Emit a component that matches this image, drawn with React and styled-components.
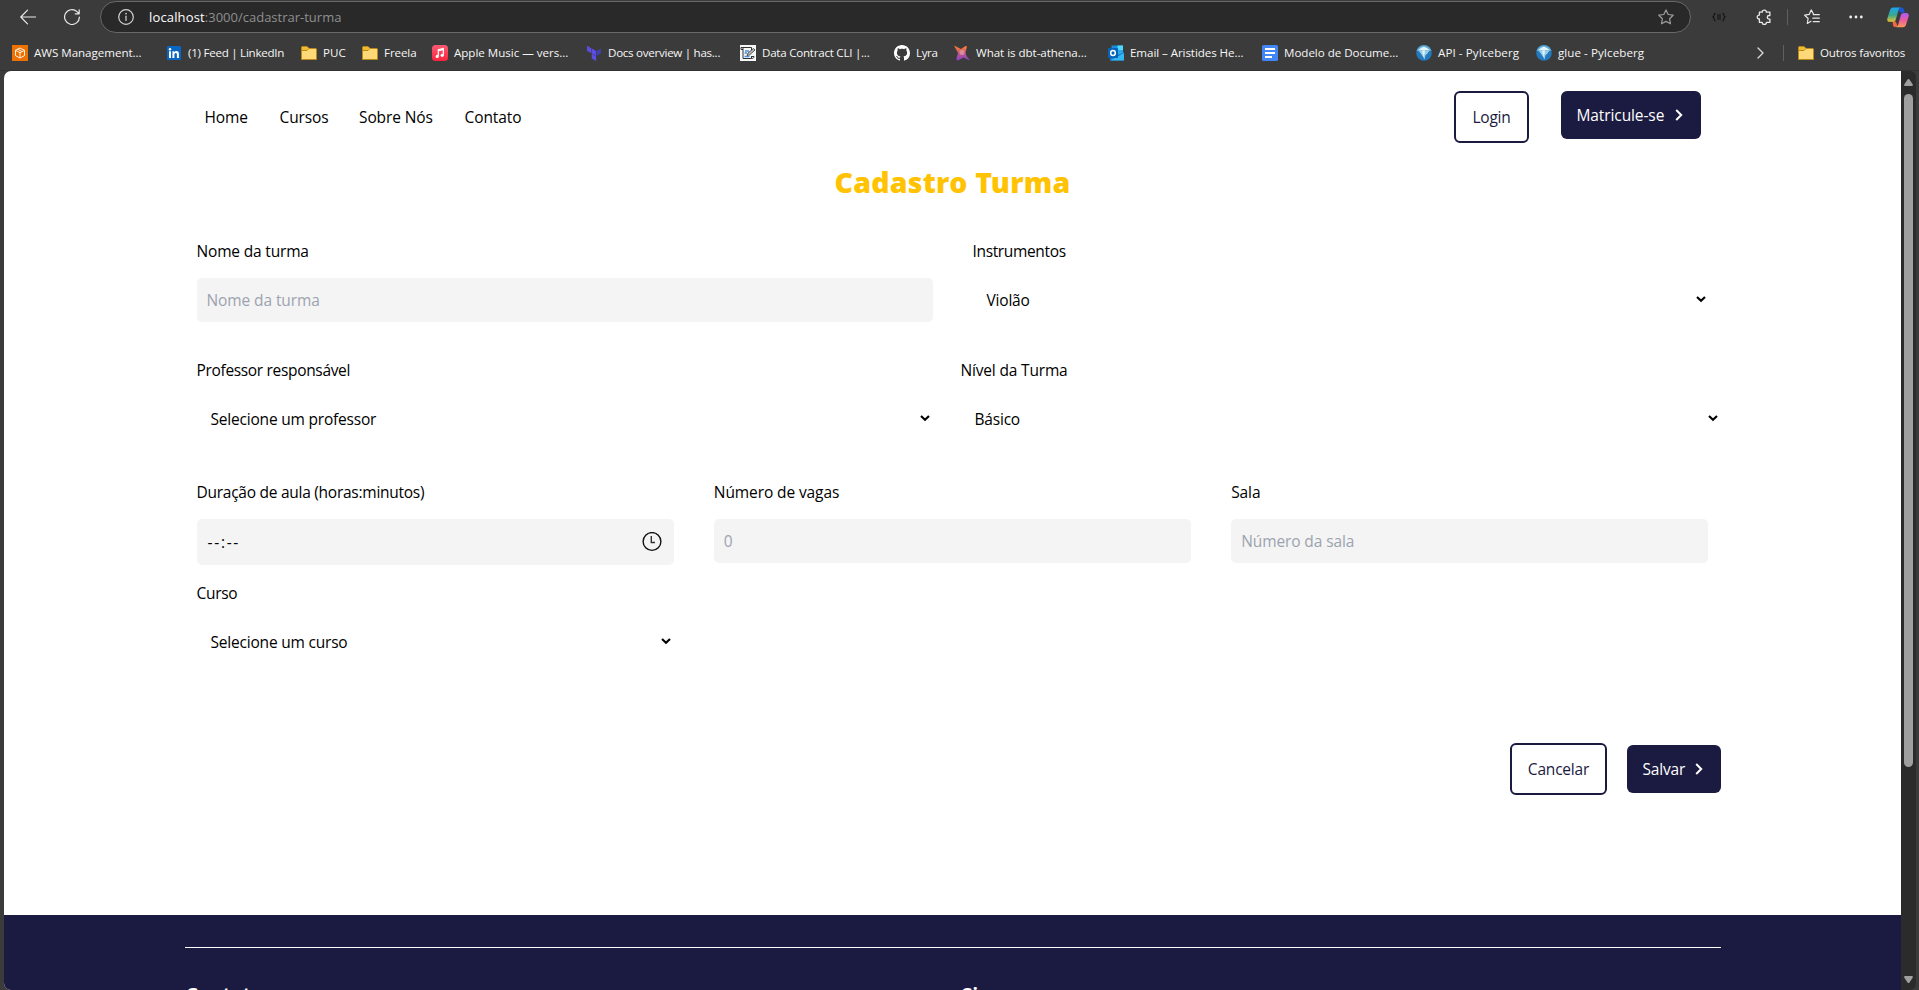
import React from "react";
import styled, { createGlobalStyle } from "styled-components";

const NAVY = "#1b1a40";

const GlobalStyle = createGlobalStyle`
  * { box-sizing: border-box; }
  body {
    margin: 0;
    background: #3b3b3b;
    font-family: "Open Sans", "Noto Sans", sans-serif;
    font-size: 15.5px;
    line-height: 24px;
    letter-spacing: -0.1px;
    color: #000;
  }
  svg { display: block; flex: none; }
`;

const Window = styled.div`
  display: flex;
  flex-direction: column;
  width: 1919px;
  height: 990px;
  overflow: hidden;
  background: #3b3b3b;
`;

/* ---------- browser chrome ---------- */

const Toolbar = styled.div`
  display: flex;
  align-items: center;
  height: 34px;
  padding: 0 10px 0 20px;
`;

const ToolIcon = styled.div`
  display: flex;
  margin-left: ${(p) => p.$gap || 0}px;
`;

const AddressBar = styled.div`
  display: flex;
  align-items: center;
  width: 1591px;
  height: 32px;
  margin: 1px 0 1px 20px;
  padding: 0 16px 0 17px;
  border: 1px solid #686868;
  border-radius: 16px;
  background: #292929;
`;

const Url = styled.div`
  flex: 1;
  margin-left: 15px;
  font-size: 13px;
  letter-spacing: 0;
  color: #8f8f8f;
`;

const Host = styled.span`
  color: #fff;
  letter-spacing: 0.15px;
`;

const Divider = styled.div`
  width: 1px;
  height: 16px;
  margin-left: ${(p) => p.$gap}px;
  background: #606060;
`;

const BookmarksBar = styled.div`
  display: flex;
  align-items: center;
  height: 37px;
  padding: 1px 0 0 12px;
  border-bottom: 1px solid #323232;
  color: #f6f6f6;
`;

const Bookmark = styled.div`
  display: flex;
  align-items: center;
  gap: 6px;
  flex: none;
  width: ${(p) => p.$width}px;
  font-size: 11.6px;
  line-height: 16px;
  letter-spacing: ${(p) => p.$track || 0}px;
  white-space: nowrap;
`;

const BookmarkEnd = styled.div`
  display: flex;
  align-items: center;
  margin-left: auto;
`;

/* ---------- viewport ---------- */

const Viewport = styled.div`
  display: flex;
  height: 919px;
  padding: 0 3px 0 4px;
`;

const Page = styled.div`
  display: flex;
  flex-direction: column;
  flex: 1;
  overflow: hidden;
  background: #fff;
  border-radius: 7px 0 0 7px;
`;

const Scrollbar = styled.div`
  display: flex;
  flex-direction: column;
  align-items: center;
  width: 15px;
  padding: 8px 0 7px;
  background: #2b2b2b;
  border-radius: 0 6px 6px 0;
`;

const Thumb = styled.div`
  width: 9px;
  height: 673px;
  margin: 8px 0 auto;
  border-radius: 5px;
  background: #9f9f9f;
`;

const Container = styled.div`
  width: 1536px;
  margin: 0 auto;
`;

const Header = styled.header`
  display: flex;
  align-items: center;
  height: 72px;
  padding: 20px 20px 0;
`;

const Nav = styled.nav`
  display: flex;
  flex: 1;
`;

const NavLink = styled.a`
  width: ${(p) => p.$width}px;
  white-space: nowrap;
`;

const HeaderActions = styled.div`
  display: flex;
  align-items: flex-start;
  gap: 32px;
  height: 52px;
`;

const OutlineButton = styled.button`
  width: ${(p) => p.$width}px;
  height: 52px;
  padding: 0 0 0 1px;
  border: 2px solid ${NAVY};
  border-radius: 6px;
  background: #fff;
  color: ${NAVY};
  font: inherit;
  letter-spacing: -0.2px;
`;

const SolidButton = styled.button`
  display: flex;
  align-items: center;
  justify-content: space-between;
  width: ${(p) => p.$width}px;
  height: 48px;
  padding: 0 18px 0 16px;
  border: 0;
  border-radius: 6px;
  background: ${NAVY};
  color: #fff;
  font: inherit;
  letter-spacing: ${(p) => p.$track || -0.1}px;
`;

const Title = styled.h1`
  margin: 21px 0 39px;
  font-family: "Noto Sans", "Open Sans", sans-serif;
  font-size: 28.5px;
  font-weight: 900;
  line-height: 36px;
  letter-spacing: 0.25px;
  text-align: center;
  color: #ffc303;
`;

const Row = styled.div`
  display: flex;
  gap: ${(p) => p.$gap || 40}px;
  padding: 0 ${(p) => (p.$flush ? 0 : 12)}px 0 12px;
  margin-bottom: ${(p) => p.$after}px;
`;

const Field = styled.div`
  display: flex;
  flex-direction: column;
  gap: 15px;
  ${(p) => (p.$width ? `width: ${p.$width}px;` : "flex: 1;")}
`;

const Label = styled.label`
  white-space: nowrap;
  letter-spacing: ${(p) => p.$track || -0.1}px;
`;

const InputBox = styled.div`
  display: flex;
  align-items: center;
  justify-content: space-between;
  height: ${(p) => (p.$time ? 46 : 44)}px;
  padding: 0 12px 0 10px;
  border-radius: 5px;
  background: #f4f4f4;
  color: ${(p) => (p.$time ? "#000" : "#9ca3af")};
`;

const TimeValue = styled.span`
  padding-left: 1px;
  letter-spacing: 1.7px;
`;

const SelectBox = styled.div`
  display: flex;
  align-items: center;
  justify-content: space-between;
  height: 44px;
  padding: 0 3px 0 14px;
  letter-spacing: -0.2px;
`;

const SelectMark = styled.span`
  padding-bottom: 2px;
`;

const FormActions = styled.div`
  display: flex;
  justify-content: flex-end;
  align-items: center;
  gap: 20px;
`;

const Footer = styled.footer`
  height: 75px;
  margin-top: auto;
  padding-top: 32px;
  background: ${NAVY};
`;

const FooterGrid = styled.div`
  display: grid;
  grid-template-columns: 776px 1fr;
  padding-top: 33px;
  border-top: 1px solid #fff;
  color: #fff;
`;

const FooterTitle = styled.h2`
  margin: 0;
  padding-left: 1px;
  font-size: 19.5px;
  font-weight: 700;
  line-height: 28px;
`;

/* ---------- icons ---------- */

const Line = ({ w = 16, h = w, box = `0 0 ${w} ${h}`, color = "#e8e8e8", sw = 1.2, children }) => (
  <svg width={w} height={h} viewBox={box} fill="none" stroke={color} strokeWidth={sw} strokeLinecap="round" strokeLinejoin="round">
    {children}
  </svg>
);

const BackIcon = () => <Line><path d="M15.5 8H.8M7.5 1.2.8 8l6.7 6.8" /></Line>;
const ReloadIcon = () => <Line><path d="M15.4 8A7.4 7.4 0 1 1 13 2.6L15 4.6M15.2.8v4h-4" /></Line>;
const InfoIcon = () => <Line color="#d5d5d5"><circle cx="8" cy="8" r="7.3" /><path d="M8 7.2v4.3" /><path d="M8 4.6v.1" strokeWidth="1.6" /></Line>;
const StarIcon = () => <Line color="#9c9c9c"><path d="M8 .9l2.2 4.6 5 .7-3.6 3.5.9 5.1L8 12.4l-4.5 2.4.9-5.1L.8 6.2l5-.7z" /></Line>;
const BracesIcon = () => <Line w={14} h={10} color="#111" sw={1.1}><path d="M3.2 1.2C1.600 1.200 2.800 4.600.8 5c2 .4.8 3.800 2.400 3.800M10.800 1.200c1.600 0 .4 3.400 2.400 3.800-2 .4-.8 3.800-2.400 3.800" /><path d="M5 3h4M5 5h4M5 7h4" strokeLinecap="butt" /></Line>;
const PuzzleIcon = () => <Line w={15} h={16} sw={1.3}><path d="M4 3.2h2.2a2.1 2.1 0 0 1 4.2 0h3.5v3.3h-.8a1.7 1.7 0 0 0 0 3.6h.8v3.3h-3.5a2.1 2.1 0 0 1-4.2 0H3.4V10h-.7a2 2 0 0 1 0-3.9h.7V3.2z" /></Line>;
const FavoritesIcon = () => <Line><path d="M9.5 5 7.2.9 5.2 5.4l-4.5.8 3.4 3.3-.8 5L7 12.3M9.3 5.7h6M8.8 9.2h6.5M9.3 12.7h6" /></Line>;
const DotsIcon = () => <svg width="14" height="4" fill="#f0f0f0"><circle cx="1.7" cy="2" r="1.4" /><circle cx="7" cy="2" r="1.4" /><circle cx="12.3" cy="2" r="1.4" /></svg>;

const CopilotIcon = () => (
  <svg width="22" height="21" viewBox="0 0 22 21">
    <defs>
      <linearGradient id="cpA" x1="0" y1="0" x2="0" y2="1"><stop offset="0" stopColor="#1ba4f0" /><stop offset=".55" stopColor="#3ba88a" /><stop offset="1" stopColor="#f2c230" /></linearGradient>
      <linearGradient id="cpB" x1="0" y1="0" x2="0" y2="1"><stop offset="0" stopColor="#a95cf5" /><stop offset=".5" stopColor="#ec5aa0" /><stop offset="1" stopColor="#fb9a5c" /></linearGradient>
    </defs>
    <path d="M12.500.5h2.200c1 0 1.700.8 2 1.700l1 3.400h-3.500c-1.400 0-2-1-2.200-2z" fill="#1c55d8" />
    <path d="M5.600 14.500h3.200l1.300 3.200c.3 1 .8 2.300 2.200 2.300H8c-1.400 0-1.700-1-2-2z" fill="#f4683c" />
    <path d="M6.300.5h7.200c-1.300.6-1.700 1.700-2.100 3l-2.500 8.700c-.5 1.600-1.400 2.600-3.100 2.600H2.400C.5 14.800-.1 13 .4 11.300l2.600-8C3.500 1.600 4.500.5 6.300.5z" fill="url(#cpA)" />
    <path d="M15.700 20.200H9.200c1.300-.6 1.700-1.700 2.100-3l2.400-8.500c.5-1.600 1.400-2.700 3.100-2.700h2.800c1.900 0 2.500 1.700 2 3.500l-2.500 7.900c-.5 1.700-1.600 2.800-3.400 2.800z" fill="url(#cpB)" />
  </svg>
);

const AwsIcon = () => (
  <svg width="16" height="16"><path fill="#ed7100" d="M0 0h16v16H0z" /><path d="M8 3l4.500 2.300v5.300L8 13l-4.500-2.400V5.300zM3.500 5.300 8 7.700l4.500-2.400M8 7.700V13M5.700 4.200l4.500 2.400" fill="none" stroke="#fff" strokeWidth=".9" /></svg>
);
const LinkedInIcon = () => (
  <svg width="16" height="16"><rect x="1" y="1" width="14" height="14" rx="1" fill="#0a66c2" /><path d="M3 6.300h2V13H3zM6.400 6.300h1.900v1c.5-.8 1.200-1.200 2.100-1.200 1.900 0 2.500 1.200 2.500 3.100V13h-2V9.700c0-1-.2-1.800-1.200-1.800s-1.300.8-1.300 1.800V13h-2z" fill="#fff" /><circle cx="4" cy="4.200" r="1.200" fill="#fff" /></svg>
);
const FolderIcon = () => (
  <svg width="16" height="16"><path d="M.5 14.500V2.500q0-1 1-1h4.500l2 2h6.500q1 0 1 1v10z" fill="#ffd977" stroke="#b98a1b" /><path d="M1 2h4.800l1.500 1.700L5.800 5.200H1z" fill="#f0bc2e" /><path d="M1 5.500h5l1.800-1.800" fill="none" stroke="#b98a1b" /></svg>
);
const MusicIcon = () => (
  <svg width="16" height="16"><defs><linearGradient id="am" x2="0" y2="1"><stop stopColor="#fb5c74" /><stop offset="1" stopColor="#fa233b" /></linearGradient></defs><rect width="16" height="16" rx="3.500" fill="url(#am)" /><path d="M6.300 11V4.700l5-1.100v6.300" fill="none" stroke="#fff" strokeWidth="1.200" /><path d="M6.300 4.500l5-1v1.700l-5 1z" fill="#fff" /><circle cx="5.200" cy="11.400" r="1.600" fill="#fff" /><circle cx="10.200" cy="10.300" r="1.600" fill="#fff" /></svg>
);
const TerraformIcon = () => (
  <svg width="16" height="16"><path d="M1 .8l4.300 2.500v5L1 5.800zM5.800 3.500l4.300 2.500v5L5.800 8.500zM5.800 9l4.300 2.500v4.500l-4.300-2.500z" fill="#5c4ee5" /><path d="M10.600 6l4.300-2.500v4.900L10.600 11z" fill="#4040b2" /></svg>
);
const ContractIcon = () => (
  <svg width="16" height="16"><path fill="#f7f7f7" d="M0 0h16v16H0z" /><path d="M1 2.500h10.500v3M3 3v10.500h8.500V11M1 2.500v2h2M11.500 13.500c2 0 2.500-1 2.500-2h-2.500" fill="none" stroke="#333" /><path d="M7 10.500l1-2.500 5.500-4.500 1.500 1.500-5.500 5z" fill="#bbb" stroke="#333" strokeWidth=".8" /><path d="M5 6h4M4.500 8h2.500M4.500 11.500h5" stroke="#4a90e8" strokeWidth="1.300" /></svg>
);
const GithubIcon = () => (
  <svg width="16" height="16" viewBox="0 0 16 16"><path fill="#fff" d="M8 0C3.580 0 0 3.580 0 8c0 3.540 2.290 6.530 5.470 7.590.4.070.550-.170.550-.380 0-.190-.010-.820-.010-1.490-2.010.370-2.530-.490-2.690-.940-.090-.230-.480-.940-.820-1.130-.280-.150-.680-.520-.010-.530.630-.010 1.080.580 1.230.820.720 1.210 1.870.870 2.330.660.070-.520.280-.870.510-1.070-1.780-.200-3.640-.890-3.640-3.950 0-.870.310-1.590.820-2.150-.080-.200-.360-1.020.080-2.120 0 0 .670-.210 2.200.820.640-.180 1.320-.270 2-.270s1.360.090 2 .270c1.530-1.040 2.200-.820 2.200-.820.440 1.100.160 1.920.080 2.120.510.560.820 1.270.820 2.150 0 3.070-1.870 3.750-3.650 3.950.290.250.540.730.540 1.480 0 1.070-.010 1.930-.010 2.200 0 .210.150.460.550.380A8.010 8.010 0 0 0 16 8c0-4.420-3.580-8-8-8z" /></svg>
);
const DbtIcon = () => (
  <svg width="16" height="16"><defs><linearGradient id="dbt" x2="0" y2="1"><stop offset=".1" stopColor="#ff7a33" /><stop offset=".5" stopColor="#c0597f" /><stop offset="1" stopColor="#8a3fd0" /></linearGradient></defs><path d="M0 .5 7 4l4.500-3 1.500.5-1.500 6L12.500 11l3.500 4.500L9.500 12.500 4 15.500 2.200 14.500 4 8z" fill="url(#dbt)" /><circle cx="8" cy="7.500" r="2.500" fill="#e19aa8" opacity=".75" /></svg>
);
const OutlookIcon = () => (
  <svg width="16" height="16"><path fill="#1490df" d="M3.500.5H15V10H3.500z" /><path fill="#50d9ff" d="M9.500.5H15V5H9.500z" /><path fill="#28a8ea" d="M9.500 5H15v4H9.500z" /><path fill="#1678cc" d="M2 8l7.500 3L16 7v8.500H2z" /><path fill="#35b8f1" d="M2 15.500 16 8v7q0 .5-.5.500z" /><rect y="3" width="10" height="10" rx=".7" fill="#0364b8" /><ellipse cx="5" cy="8" rx="2.300" ry="2.500" fill="none" stroke="#fff" strokeWidth="1.500" /></svg>
);
const DocsIcon = () => (
  <svg width="16" height="16"><rect width="16" height="16" rx="1.500" fill="#4285f4" /><path d="M3 4h10M3 8h10M3 12h7" stroke="#fff" strokeWidth="1.900" /></svg>
);
const IcebergIcon = () => (
  <svg width="16" height="16"><circle cx="8" cy="8" r="7.800" fill="#2478bd" /><path d="M.5 6A7.800 7.800 0 0 1 15.500 6z" fill="#5aa9d6" /><path d="M2 5.200 5.500 2.500 8 1.500l3 1.500 3 2.200z" fill="#e3f4fb" /><path d="M2.500 5.500h11L11 9l-1.500 1-1 4.500L6.500 11z" fill="#9bd0ea" /><path d="M6 5.500h3L7.800 12z" fill="#e3f4fb" /></svg>
);

const ClockIcon = () => <Line w={20} color="#111" sw={1.4}><circle cx="10" cy="9.500" r="8.900" /><path d="M9.300 4v6.500h3.700" stroke="#333" strokeLinecap="butt" strokeLinejoin="miter" /></Line>;
const SelectArrow = () => <svg width="10" height="7" viewBox="0 0 10 7"><path d="M1 1l4 3.700L9 1" fill="none" stroke="#000" strokeWidth="2.200" /></svg>;
const ButtonArrow = () => <svg width="8" height="12" viewBox="0 0 8 12"><path d="M1.200 1l5 5-5 5" fill="none" stroke="#fff" strokeWidth="2" /></svg>;

const bookmarks = [
  { Icon: AwsIcon, text: "AWS Management...", width: 154, track: -0.04 },
  { Icon: LinkedInIcon, text: "(1) Feed | LinkedIn", width: 135, track: -0.26 },
  { Icon: FolderIcon, text: "PUC", width: 61 },
  { Icon: FolderIcon, text: "Freela", width: 70, track: -0.1 },
  { Icon: MusicIcon, text: "Apple Music — vers...", width: 154, track: -0.03 },
  { Icon: TerraformIcon, text: "Docs overview | has...", width: 154, track: -0.28 },
  { Icon: ContractIcon, text: "Data Contract CLI |...", width: 154, track: -0.25 },
  { Icon: GithubIcon, text: "Lyra", width: 60, track: -0.4 },
  { Icon: DbtIcon, text: "What is dbt-athena...", width: 154, track: -0.05 },
  { Icon: OutlookIcon, text: "Email – Aristides He...", width: 154, track: -0.08 },
  { Icon: DocsIcon, text: "Modelo de Docume...", width: 154, track: -0.04 },
  { Icon: IcebergIcon, text: "API - PyIceberg", width: 120, track: 0.07 },
  { Icon: IcebergIcon, text: "glue - PyIceberg", width: 120, track: 0.05 },
];

const SelectField = ({ label, value, width, track }) => (
  <Field $width={width}>
    <Label $track={track}>{label}</Label>
    <SelectBox><span>{value}</span><SelectMark><SelectArrow /></SelectMark></SelectBox>
  </Field>
);

const TextField = ({ label, placeholder, track }) => (
  <Field>
    <Label $track={track}>{label}</Label>
    <InputBox><span>{placeholder}</span></InputBox>
  </Field>
);

export default function App() {
  return (
    <Window>
      <GlobalStyle />
      <Toolbar>
        <ToolIcon><BackIcon /></ToolIcon>
        <ToolIcon $gap={28}><ReloadIcon /></ToolIcon>
        <AddressBar>
          <InfoIcon />
          <Url><Host>localhost</Host>:3000/cadastrar-turma</Url>
          <StarIcon />
        </AddressBar>
        <ToolIcon $gap={21}><BracesIcon /></ToolIcon>
        <ToolIcon $gap={30}><PuzzleIcon /></ToolIcon>
        <Divider $gap={16} />
        <ToolIcon $gap={16}><FavoritesIcon /></ToolIcon>
        <ToolIcon $gap={29}><DotsIcon /></ToolIcon>
        <ToolIcon $gap={24}><CopilotIcon /></ToolIcon>
      </Toolbar>
      <BookmarksBar>
        {bookmarks.map(({ Icon, text, width, track }) => (
          <Bookmark key={text} $width={width} $track={track}><Icon /><span>{text}</span></Bookmark>
        ))}
        <BookmarkEnd>
          <Line w={7} h={12} color="#d8d8d8" sw={1.4}><path d="M1 1l5 5-5 5" /></Line>
          <Divider $gap={19} />
          <ToolIcon $gap={14}><Bookmark $width={121} $track={-0.18}><FolderIcon /><span>Outros favoritos</span></Bookmark></ToolIcon>
        </BookmarkEnd>
      </BookmarksBar>
      <Viewport>
        <Page>
          <Container>
            <Header>
              <Nav>
                <NavLink $width={75}>Home</NavLink>
                <NavLink $width={79.5}>Cursos</NavLink>
                <NavLink $width={105.5}>Sobre Nós</NavLink>
                <NavLink>Contato</NavLink>
              </Nav>
              <HeaderActions>
                <OutlineButton $width={75}>Login</OutlineButton>
                <SolidButton $width={140}>Matricule-se<ButtonArrow /></SolidButton>
              </HeaderActions>
            </Header>
            <Title>Cadastro Turma</Title>
            <Row $after={36}>
              <TextField label="Nome da turma" placeholder="Nome da turma" track={-0.17} />
              <SelectField label="Instrumentos" value="Violão" track={-0.35} />
            </Row>
            <Row $after={39} $gap={28} $flush>
              <SelectField label="Professor responsável" value="Selecione um professor" width={736} track={-0.33} />
              <SelectField label="Nível da Turma" value="Básico" track={-0.17} />
            </Row>
            <Row $after={16}>
              <Field>
                <Label $track={-0.26}>Duração de aula (horas:minutos)</Label>
                <InputBox $time><TimeValue>--:--</TimeValue><ClockIcon /></InputBox>
              </Field>
              <TextField label="Número de vagas" placeholder="0" />
              <TextField label="Sala" placeholder="Número da sala" />
            </Row>
            <Row $after={79}>
              <SelectField label="Curso" value="Selecione um curso" width={477.3} track={-0.3} />
            </Row>
            <FormActions>
              <OutlineButton $width={97}>Cancelar</OutlineButton>
              <SolidButton $width={94} $track={-0.2}>Salvar<ButtonArrow /></SolidButton>
            </FormActions>
          </Container>
          <Footer>
            <Container>
              <FooterGrid>
                <FooterTitle>Contato</FooterTitle>
                <FooterTitle>Siga-nos</FooterTitle>
              </FooterGrid>
            </Container>
          </Footer>
        </Page>
        <Scrollbar>
          <svg width="9" height="7"><path d="M4.500 0q.6 0 1 .6L8.800 5.500q.3 1.500-.8 1.500H1Q-.1 7 .2 5.500L3.500.6q.4-.6 1-.6z" fill="#9f9f9f" /></svg>
          <Thumb />
          <svg width="9" height="7"><path d="M4.500 7q.6 0 1-.6L8.800 1.500Q9.100 0 8 0H1Q-.1 0 .2 1.500L3.500 6.400q.4.600 1 .6z" fill="#9f9f9f" /></svg>
        </Scrollbar>
      </Viewport>
    </Window>
  );
}
